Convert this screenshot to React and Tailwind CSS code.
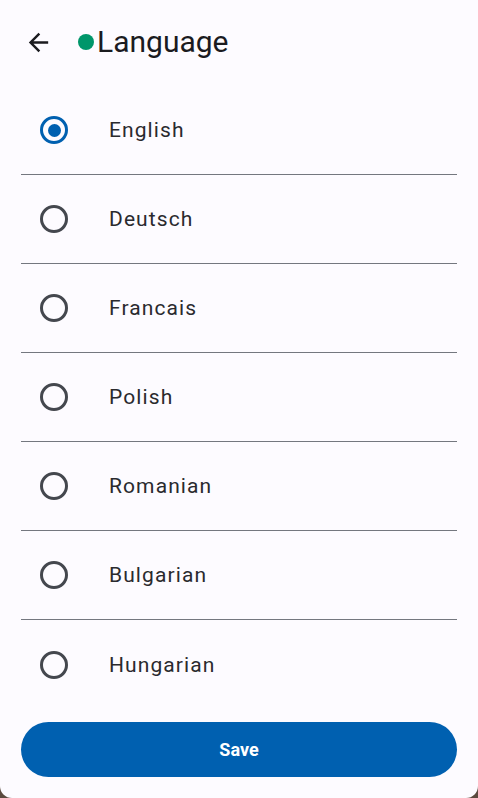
import React, { useState } from 'react';

const LANGUAGES = ['English', 'Deutsch', 'Francais', 'Polish', 'Romanian', 'Bulgarian', 'Hungarian'];

const Radio = ({ checked }) => (
  <div
    className={`w-[28px] h-[28px] rounded-full border-[3px] flex items-center justify-center ${
      checked ? 'border-[#0060b0]' : 'border-[#44474e]'
    }`}
  >
    {checked && <div className="w-[13px] h-[13px] rounded-full bg-[#0060b0]" />}
  </div>
);

const App = () => {
  const [selected, setSelected] = useState('English');

  return (
    <div className="w-[478px] h-[798px] bg-[#5b4a3f]" style={{ fontFamily: 'Roboto, "Noto Sans", sans-serif' }}>
      <div className="w-full h-full bg-[#fdfbff] rounded-b-[12px] flex flex-col">
        {/* Header */}
        <div className="h-[86px] flex items-center pl-[24px] pb-[2px]">
          <svg width="29" height="29" viewBox="0 0 24 24" className="text-[#1b1b1f]">
            <path d="M20 11H7.83l5.59-5.59L12 4l-8 8 8 8 1.41-1.41L7.83 13H20v-2z" fill="currentColor" />
          </svg>
          <div className="ml-[25px] w-[16px] h-[16px] rounded-full bg-[#00966a]" />
          <h1 className="ml-[3px] text-[30px] text-[#1b1b1f] leading-none">Language</h1>
        </div>

        {/* List */}
        <div className="px-[21px]">
          {LANGUAGES.map((lang, i) => (
            <div
              key={lang}
              onClick={() => setSelected(lang)}
              className={`h-[89px] flex items-center ${i < LANGUAGES.length - 1 ? 'border-b border-[#74777f]' : ''}`}
            >
              <div className="ml-[19px]">
                <Radio checked={selected === lang} />
              </div>
              <span className="ml-[41px] mt-[2px] text-[21px] tracking-[1.1px] text-[#2a2a2e] font-[380]">{lang}</span>
            </div>
          ))}
        </div>

        {/* Save */}
        <div className="px-[21px] mt-[13px]">
          <button className="w-full h-[55px] rounded-full bg-[#0060b0] text-white text-[18px] font-bold">
            Save
          </button>
        </div>
      </div>
    </div>
  );
};

export default App;
